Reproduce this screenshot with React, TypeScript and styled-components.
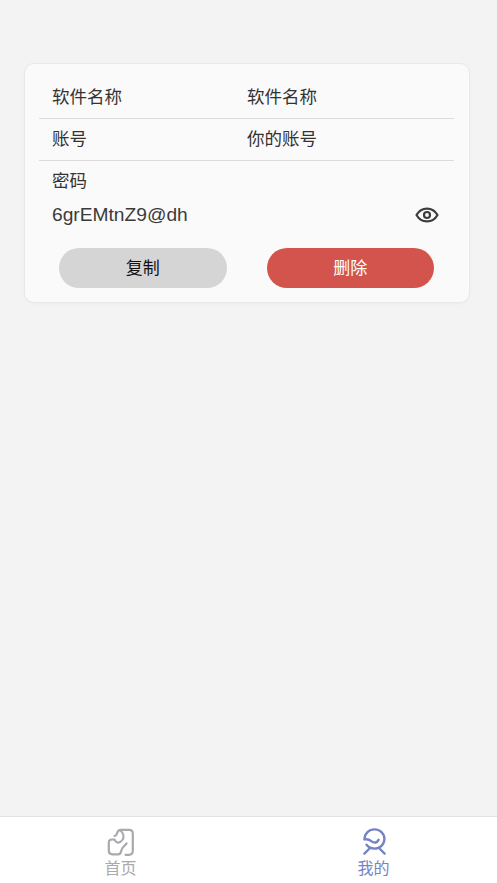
import * as React from "react";
import styled, { createGlobalStyle } from "styled-components";

const GlobalStyle = createGlobalStyle`
    html, body {
        margin: 0;
        padding: 0;
        height: 100%;
        background: #f3f3f3;
        font-family: "Liberation Sans", "Noto Sans CJK SC", sans-serif;
    }
    #root {
        height: 100%;
    }
`;

const Page = styled.div`
    display: flex;
    flex-direction: column;
    height: 883px;
    overflow: hidden;
    background: #f3f3f3;
`;

const Content = styled.main`
    flex: 1;
    padding: 63px 27px 0 24px;
`;

const Card = styled.section`
    box-sizing: border-box;
    height: 240px;
    padding: 13px 15px 0 14px;
    background: #fafafa;
    border: 1px solid #e9e9e9;
    border-radius: 10px;
    box-shadow: 0 1px 3px rgba(0, 0, 0, 0.03);
`;

const Row = styled.div`
    display: flex;
    align-items: center;
    box-sizing: border-box;
    height: 42px;
    padding: 0 0 4px 13px;
    border-bottom: 1px solid #dcdcdc;
    font-size: 17.5px;
    color: #333;
`;

const Label = styled.span`
    width: 195px;
`;

const PasswordLabel = styled.div`
    padding: 8px 0 0 13px;
    height: 25px;
    line-height: 25px;
    font-size: 17.5px;
    color: #333;
`;

const PasswordRow = styled.div`
    display: flex;
    align-items: center;
    justify-content: space-between;
    height: 30px;
    margin-top: 6px;
    padding: 0 15px 0 13px;
    font-size: 19.2px;
    color: #3a3a3a;
`;

const EyeIcon = styled.svg`
    display: block;
    width: 24px;
    height: 24px;
    color: #3c3c3c;
`;

const Actions = styled.div`
    display: flex;
    justify-content: space-between;
    margin-top: 18px;
    padding: 0 20px;
`;

const Button = styled.button<{ $danger?: boolean }>`
    width: 167.5px;
    height: 40px;
    padding: 0 0 3px;
    border: none;
    border-radius: 20px;
    font-family: inherit;
    font-size: 17px;
    background: ${props => (props.$danger ? "#d3544d" : "#d5d5d5")};
    color: ${props => (props.$danger ? "#fff" : "#111")};
`;

const TabBar = styled.nav`
    display: flex;
    flex-shrink: 0;
    height: 66px;
    background: #fff;
    border-top: 1px solid #e2e2e2;
`;

const Tab = styled.div<{ $active?: boolean }>`
    display: flex;
    flex: 1;
    flex-direction: column;
    align-items: center;
    padding-top: 9px;
    font-size: 16px;
    line-height: 24px;
    color: ${props => (props.$active ? "#7484c6" : "#a9a9ae")};
`;

const TabIcon = styled.svg`
    display: block;
    width: 30px;
    height: 30px;
    margin-bottom: 1px;
`;

const HomeTab = styled(Tab)`
    padding-right: 12px;
`;

const MineTab = styled(Tab)`
    padding-right: 3px;
`;

const App: React.FunctionComponent = () => (
    <Page>
        <GlobalStyle />
        <Content>
            <Card>
                <Row>
                    <Label>软件名称</Label>
                    <span>软件名称</span>
                </Row>
                <Row>
                    <Label>账号</Label>
                    <span>你的账号</span>
                </Row>
                <PasswordLabel>密码</PasswordLabel>
                <PasswordRow>
                    <span>6grEMtnZ9@dh</span>
                    <EyeIcon viewBox="0 0 24 24" fill="none" stroke="currentColor">
                        <path d="M1.5 12C4 7.6 7.6 5.6 12 5.6s8 2 10.5 6.4c-2.5 4.4-6.1 6.4-10.5 6.4S4 16.4 1.5 12z" strokeWidth="2.2" strokeLinejoin="round" />
                        <circle cx="12" cy="12" r="3" strokeWidth="2.2" />
                    </EyeIcon>
                </PasswordRow>
                <Actions>
                    <Button>复制</Button>
                    <Button $danger>删除</Button>
                </Actions>
            </Card>
        </Content>
        <TabBar>
            <HomeTab>
                <TabIcon viewBox="0 0 30 30" fill="none" stroke="currentColor" strokeWidth="2.2" strokeLinecap="round" strokeLinejoin="round">
                    <path d="M8.500 10c1.400-.4 2.300-1.400 2.700-3 .5-2 1.500-3.200 3.500-3.200h8.500c2.400 0 3.600 1.300 3.600 3.700v17.300c0 2.600-1.300 4-3.900 4h-3.400" />
                    <path d="M8.500 13.500H6c-2 0-3.200 1.200-3.200 3.200v8.100c0 2.300 1.200 3.500 3.500 3.500H12c1.600 0 2.500-.8 3-2.400l.8-2.600c.6-2 2.600-3 4.800-6" />
                    <path d="M14.500 4.500c2.800 2.600 3.800 6.400 2.200 9-1.200 1.800-3 3-4.600 3.200-1.400.1-2.400-1.200-3.600-2.700" />
                </TabIcon>
                首页
            </HomeTab>
            <MineTab $active>
                <TabIcon viewBox="0 0 30 30" fill="none" stroke="currentColor" strokeWidth="2.4" strokeLinecap="round" strokeLinejoin="round">
                    <path d="M5.600 13C5.600 7.600 10 3.400 15.500 3.400s9.900 4.200 9.900 9.600-4.400 9.600-9.900 9.600c-3.400 0-6.200-1.400-8-3.800" />
                    <path d="M5.600 13.400c3-.6 5 .4 7 2 2.600 2 5.800 1.400 7-1.600" />
                    <path d="M11 22L5.400 27.600M20 22l5.600 5.600" />
                </TabIcon>
                我的
            </MineTab>
        </TabBar>
    </Page>
);

export default App;
